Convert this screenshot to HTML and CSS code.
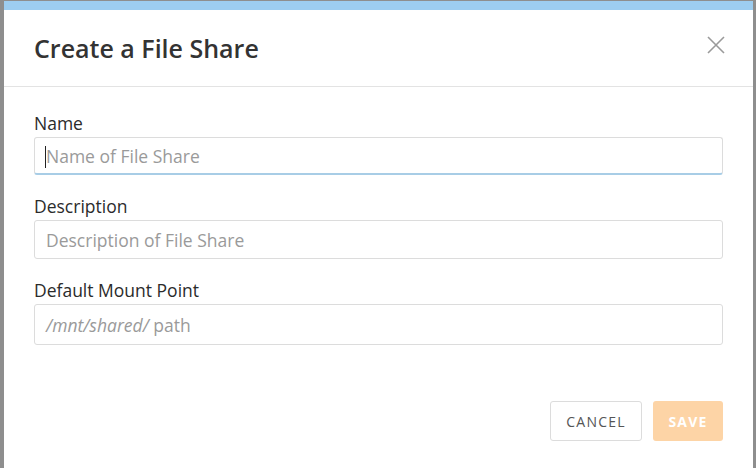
FILE: index.html
```html
<!DOCTYPE html>
<html lang="en">
<head>
<meta charset="utf-8">
<title>Create a File Share</title>
<link rel="stylesheet" href="styles.css">
</head>
<body>
<div class="modal">
  <div class="modal-header">
    <h1 class="modal-title">Create a File Share</h1>
    <button class="close" aria-label="Close">
      <svg width="18" height="18" viewBox="0 0 18 18"><path d="M1 1 L17 17 M17 1 L1 17" stroke="#9a9a9a" stroke-width="1.6" fill="none"/></svg>
    </button>
  </div>
  <div class="modal-body">
    <div class="field">
      <label class="label">Name</label>
      <div class="input focused"><span class="caret"></span><span class="ph">Name of File Share</span></div>
    </div>
    <div class="field">
      <label class="label">Description</label>
      <div class="input"><span class="ph">Description of File Share</span></div>
    </div>
    <div class="field">
      <label class="label">Default Mount Point</label>
      <div class="input tall"><span class="ph"><em>/mnt/shared/</em> path</span></div>
    </div>
    <div class="actions">
      <button class="btn btn-cancel">CANCEL</button>
      <button class="btn btn-save">SAVE</button>
    </div>
  </div>
</div>
</body>
</html>
```

FILE: styles.css
```css
html, body {
  margin: 0;
  padding: 0;
  height: 100%;
}
body {
  background: #8e8e8e;
  font-family: "Open Sans", "Noto Sans", sans-serif;
  overflow: hidden;
}
.modal {
  margin: 1px 0 0 4px;
  width: 749px;
  height: 480px;
  background: #fff;
  border-top: 9px solid #9dcdf0;
  box-sizing: border-box;
}
.modal-header {
  height: 77px;
  border-bottom: 1px solid #e3e3e3;
  box-sizing: border-box;
  display: flex;
  align-items: center;
  justify-content: space-between;
  padding: 0 28px 0 30px;
}
.modal-title {
  margin: 0;
  font-size: 25px;
  font-weight: 600;
  color: #333;
}
.close {
  border: 0;
  background: none;
  padding: 0;
  width: 18px;
  height: 18px;
  display: flex;
  margin-bottom: 6px;
  cursor: pointer;
}
.modal-body {
  padding: 25px 30px 0 30px;
}
.field {
  margin-bottom: 20px;
}
.label {
  display: block;
  font-size: 17.5px;
  line-height: 23px;
  color: #2b2b2b;
  margin-bottom: 2px;
}
.input {
  height: 39px;
  border: 1px solid #dcdcdc;
  border-radius: 3px;
  box-sizing: border-box;
  display: flex;
  align-items: center;
  padding: 0 11px;
  position: relative;
}
.input.focused {
  border-bottom: 2px solid #a8cde6;
  height: 38px;
}
.input.tall {
  height: 41px;
}
.ph {
  font-size: 17.5px;
  color: #9a9a9a;
}
.ph em {
  font-style: italic;
}
.caret {
  position: absolute;
  left: 10px;
  top: 8px;
  width: 1px;
  height: 22px;
  background: #222;
}
.actions {
  display: flex;
  justify-content: flex-end;
  gap: 11px;
  margin-top: 56px;
}
.btn {
  height: 40px;
  border-radius: 3px;
  font-family: "Open Sans", "Noto Sans", sans-serif;
  font-size: 14px;
  letter-spacing: 1.2px;
  box-sizing: border-box;
}
.btn-cancel {
  width: 92px;
  background: #fff;
  border: 1px solid #dcdcdc;
  color: #555;
}
.btn-save {
  width: 70px;
  background: #fdd4a6;
  border: 0;
  color: #fff;
  font-weight: 700;
}
```
